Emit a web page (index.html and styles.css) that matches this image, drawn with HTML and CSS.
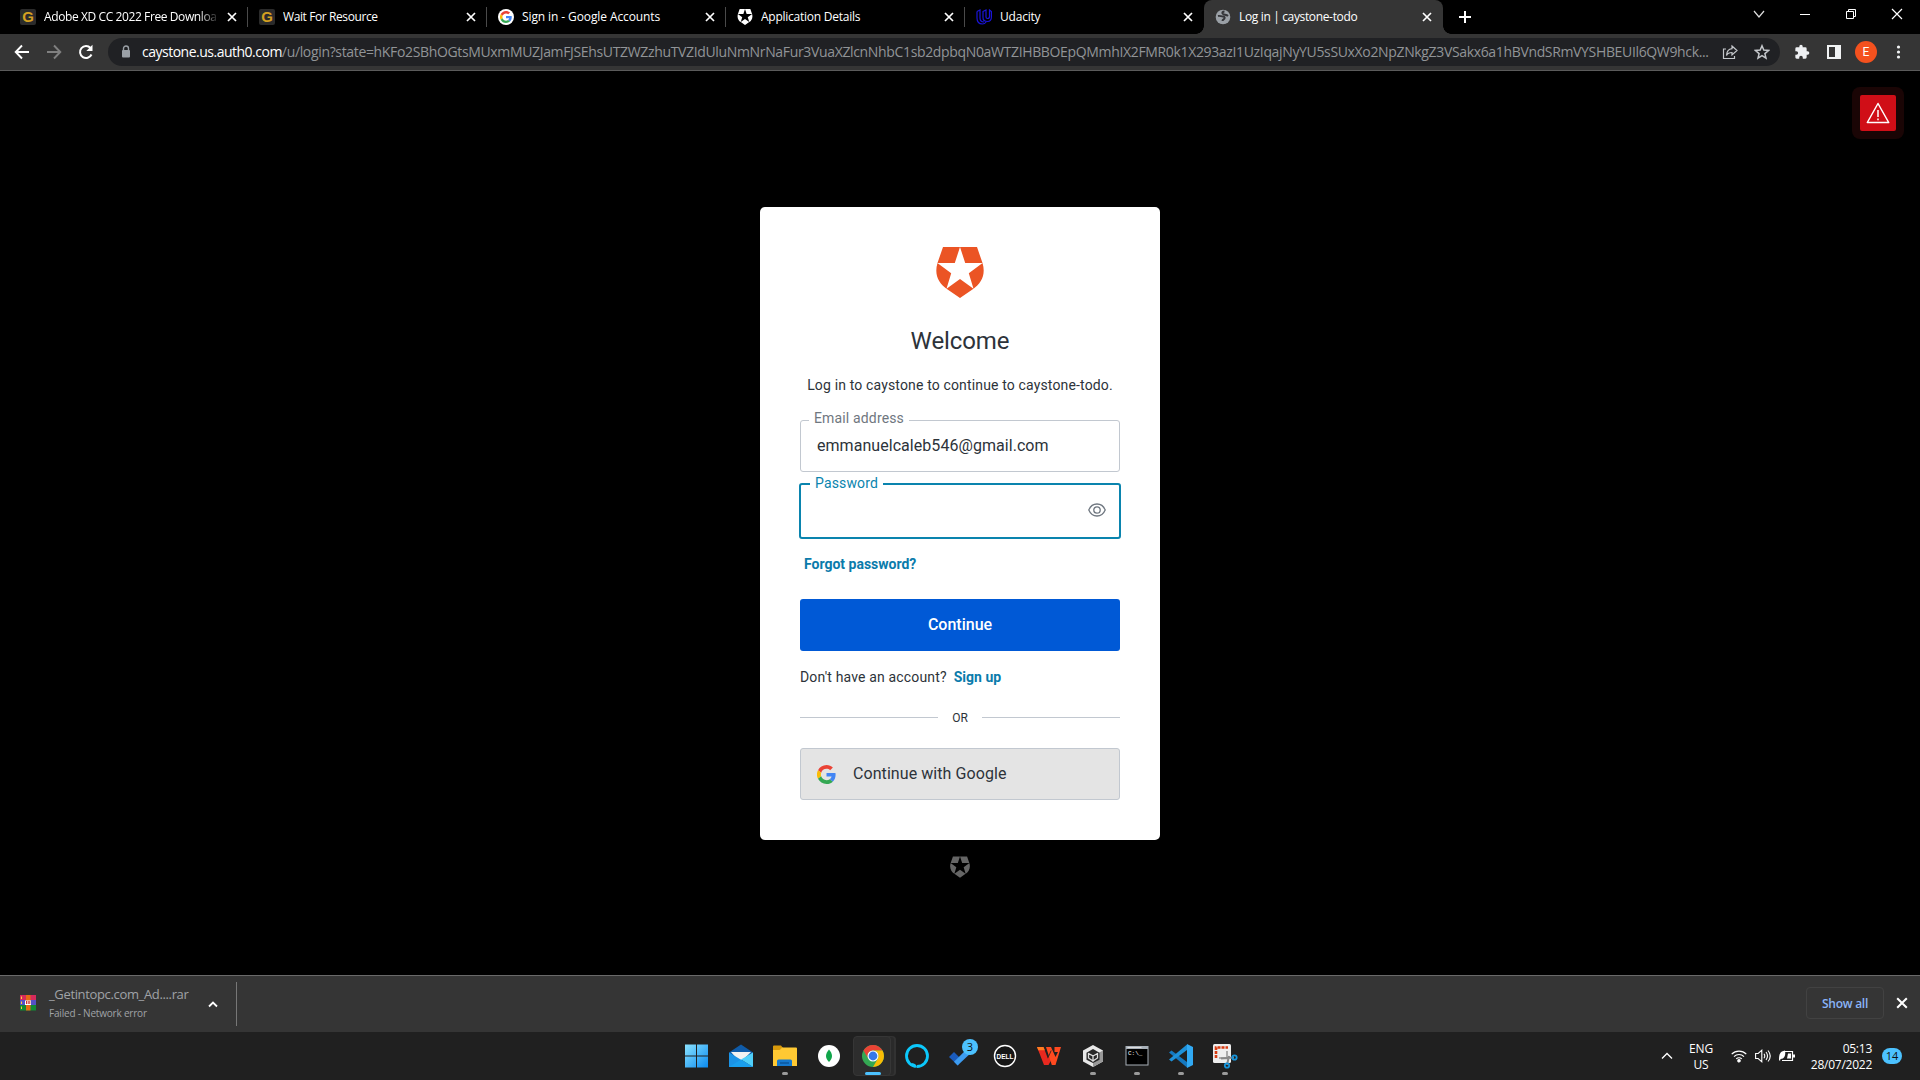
FILE: index.html
```html
<!DOCTYPE html>
<html lang="en">
<head>
<meta charset="utf-8">
<title>Log in | caystone-todo</title>
<link rel="stylesheet" href="styles.css">
</head>
<body>
<svg class="defs" width="0" height="0" aria-hidden="true">
  <symbol id="x" viewBox="0 0 10 10"><path d="M1 1l8 8M9 1L1 9" stroke="currentColor" stroke-width="1.700" fill="none"/></symbol>
  <symbol id="shield" viewBox="0 0 48 51"><path fill-rule="evenodd" fill="currentColor" d="M7 0H41L46.6 16.3C50 28 45 36.500 37.500 41.800L24 51 10.500 41.800C3 36.500-2 28 1.400 16.300ZM24 0L18.800 16H1.400L15.200 26.200 10.500 41.800 24 32 37.500 41.800 32.800 26.200 46.600 16H29.200Z"/></symbol>
  <symbol id="google" viewBox="0 0 48 48"><path fill="#ea4335" d="M24 9.500c3.500 0 6.700 1.200 9.200 3.600l6.900-6.900C35.900 2.400 30.500 0 24 0 14.600 0 6.500 5.400 2.600 13.200l8 6.200C12.400 13.700 17.700 9.500 24 9.500z"/><path fill="#4285f4" d="M47 24.600c0-1.600-.2-3.100-.4-4.600H24v9h12.900c-.6 3-2.200 5.500-4.700 7.200l7.700 6C44.400 38 47 31.800 47 24.600z"/><path fill="#fbbc05" d="M10.500 28.600a14.500 14.500 0 0 1 0-9.200l-8-6.200a24 24 0 0 0 0 21.600z"/><path fill="#34a853" d="M24 48c6.500 0 11.900-2.100 15.900-5.800l-7.700-6c-2.200 1.500-4.900 2.300-8.200 2.300-6.300 0-11.600-4.200-13.500-9.900l-8 6.200C6.500 42.600 14.600 48 24 48z"/></symbol>
  <symbol id="up" viewBox="0 0 12 8"><path d="M1 6.500l5-5 5 5" stroke="currentColor" stroke-width="1.300" fill="none"/></symbol>
</svg>

<header class="tabs">
  <div class="tab"><span class="fav gold">G</span><span class="title fade t1">Adobe XD CC 2022 Free Downloa</span><svg class="close"><use href="#x"/></svg></div>
  <div class="tab"><span class="fav gold">G</span><span class="title t2">Wait For Resource</span><svg class="close"><use href="#x"/></svg></div>
  <div class="tab"><span class="fav round"><svg width="12" height="12"><use href="#google"/></svg></span><span class="title t3">Sign in - Google Accounts</span><svg class="close"><use href="#x"/></svg></div>
  <div class="tab"><svg class="fav white"><use href="#shield"/></svg><span class="title t4">Application Details</span><svg class="close"><use href="#x"/></svg></div>
  <div class="tab last"><svg class="fav" viewBox="0 0 16 16" fill="none" stroke="#1a14d8" stroke-width="1.200"><path d="M1 2.500L4 1v8c0 2.500 1.500 4 4 4M1 2.500V9c0 3.500 2 6 5.500 6 2 0 3-1 4-2.500M7 2.500L10 1v7c0 1 .5 1.500 1.500 1.500s2-.7 2-2V1L15.400 2.500V8c0 3-1.500 4.500-4 4.500S7 11 7 8.500z"/></svg><span class="title t5">Udacity</span><svg class="close"><use href="#x"/></svg></div>
  <div class="tab active"><svg class="fav" viewBox="0 0 16 16"><circle cx="8" cy="8" r="7.300" fill="#9aa0a6"/><path d="M3 7c2-.5 3 .5 5 .5 1.500 0 2 1 1.500 2s-2 1-2 2.500M9.500 2.500c-2 0-3 1.500-1.500 2.500s3.500.5 5 2" stroke="#35363a" stroke-width="1.900" fill="none"/></svg><span class="title t6">Log in | caystone-todo</span><svg class="close"><use href="#x"/></svg></div>
  <svg class="plus" viewBox="0 0 12 12"><path d="M6 0v12M0 6h12" stroke="#fff" stroke-width="2"/></svg>
  <div class="controls">
    <svg viewBox="0 0 12 12"><path d="M1 3l5 6 5-6" stroke="#ddd" stroke-width="1.200" fill="none"/></svg>
    <svg viewBox="0 0 12 12"><path d="M1 6.500h10" stroke="#fff"/></svg>
    <svg viewBox="0 0 12 12"><path d="M1.500 3.500h7v7h-7zM3.500 3.500v-2h7v7h-2" stroke="#fff" fill="none"/></svg>
    <svg viewBox="0 0 12 12"><path d="M1 1l10 10M11 1L1 11" stroke="#fff" stroke-width="1.200"/></svg>
  </div>
</header>

<nav class="toolbar">
  <div class="navicons">
    <svg viewBox="0 0 16 16"><path d="M15 8H2M8 1.500L1.700 8 8 14.500" stroke="#fff" stroke-width="1.900" fill="none"/></svg>
    <svg viewBox="0 0 16 16"><path d="M1 8h13M8 1.500L14.300 8 8 14.500" stroke="#808080" stroke-width="1.900" fill="none"/></svg>
    <svg viewBox="0 0 16 16"><path d="M13.500 10.500A6 6 0 1 1 12.500 4" stroke="#fff" stroke-width="2" fill="none"/><path d="M14.500.8v6.200H8.300z" fill="#fff"/></svg>
  </div>
  <div class="omnibox">
    <svg class="lock" viewBox="0 0 10 14"><path d="M2.500 6V3.500a2.500 2.500 0 0 1 5 0V6" stroke="#9aa0a6" stroke-width="1.400" fill="none"/><rect x="1" y="5" width="8" height="7.500" rx="1" fill="#9aa0a6"/></svg>
    <div class="url"><b>caystone.us.auth0.com</b><span>/u/login?state=hKFo2SBhOGtsMUxmMUZJamFJSEhsUTZWZzhuTVZIdUluNmNrNaFur3VuaXZlcnNhbC1sb2dpbqN0aWTZIHBBOEpQMmhIX2FMR0k1X293azI1UzIqajNyYU5sSUxXo2NpZNkgZ3VSakx6a1hBVndSRmVYSHBEUIl6QW9hck...</span></div>
    <svg class="oicon" viewBox="0 0 16 16" fill="none" stroke="#c4c7cb" stroke-width="1.200"><path d="M4 5H1.500v9.500h11V12M10 2l5 4.500L10 11V8.500C7 8.500 5.500 9.500 4.500 11.500 4.700 7.500 7 5 10 4.700z"/></svg>
    <svg class="oicon" viewBox="0 0 16 16"><path d="M8 1.800l1.800 4.300 4.700.4-3.600 3.100 1.100 4.600L8 11.700l-4 2.500 1.100-4.600L1.500 6.500l4.700-.4z" fill="none" stroke="#c4c7cb" stroke-width="1.500"/></svg>
  </div>
  <div class="actions">
    <svg viewBox="0 0 24 24"><path fill="#eef0f2" d="M20.500 11H19V7a2 2 0 0 0-2-2h-4V3.500a2.500 2.500 0 0 0-5 0V5H4a2 2 0 0 0-2 2v3.800h1.500a2.700 2.700 0 0 1 0 5.400H2V20a2 2 0 0 0 2 2h3.800v-1.500a2.700 2.700 0 0 1 5.400 0V22H17a2 2 0 0 0 2-2v-4h1.500a2.500 2.500 0 0 0 0-5z"/></svg>
    <svg viewBox="0 0 16 16"><path fill-rule="evenodd" fill="#f1f3f4" d="M1 1h14v14H1zM3 3v10h6V3z"/></svg>
    <span class="avatar">E</span>
    <svg viewBox="0 0 16 16" fill="#f1f3f4"><circle cx="8.500" cy="3" r="1.600"/><circle cx="8.500" cy="8" r="1.600"/><circle cx="8.500" cy="13" r="1.600"/></svg>
  </div>
</nav>

<main class="page">
  <div class="warn"><span><svg viewBox="0 0 24 22"><path d="M12 1.500L22.700 20.500H1.300zM12 8v7M12 16.500v1.800" fill="none" stroke="#fff" stroke-width="1.500" stroke-linejoin="round"/></svg></span></div>
  <section class="card">
    <svg class="logo"><use href="#shield"/></svg>
    <h1>Welcome</h1>
    <p class="intro">Log in to caystone to continue to caystone-todo.</p>
    <fieldset class="field"><legend>Email address</legend><span>emmanuelcaleb546@gmail.com</span></fieldset>
    <fieldset class="field focus"><legend>Password</legend><svg class="eye" viewBox="0 0 18 14" fill="none" stroke="#6f7780" stroke-width="1.300"><path d="M.8 7C2.500 3 5.500 1 9 1s6.500 2 8.200 6C15.500 11 12.500 13 9 13S2.500 11 .8 7z"/><circle cx="9" cy="7" r="3.200"/></svg></fieldset>
    <a class="forgot">Forgot password?</a>
    <button class="primary">Continue</button>
    <p class="signup"><span>Don't have an account?</span><a>Sign up</a></p>
    <div class="or"><span>OR</span></div>
    <button class="google"><svg><use href="#google"/></svg><span>Continue with Google</span></button>
  </section>
  <svg class="badge"><use href="#shield"/></svg>
</main>

<section class="shelf">
  <svg class="rar" viewBox="0 0 16 16"><path fill="#d62a5c" d="M0 0h16v5H0z"/><path fill="#5550c8" d="M0 5h16v5H0z"/><path fill="#128a35" d="M0 10h16v5.500H0z"/><path fill="#e56a16" d="M6 0h4.500v15.500H6z"/><path fill="#fff" d="M5 5.500h6V10H5z"/><path d="M6.500 6v3M8.200 6v3M9.800 6v3" stroke="#c33"/><path stroke="#ffd33c" d="M1.500 1.500v2.500M1.500 6.500V9M1.500 11.500V14"/></svg>
  <div class="file"><span>_Getintopc.com_Ad....rar</span><small>Failed - Network error</small></div>
  <svg class="chev" viewBox="0 0 10 7"><path d="M1 5.500l4-4 4 4" stroke="#fff" stroke-width="1.800" fill="none"/></svg>
  <i class="rule"></i>
  <button class="showall">Show all</button>
  <svg class="closeshelf"><use href="#x"/></svg>
</section>

<footer class="taskbar">
  <div class="apps">
    <div class="app"><svg viewBox="0 0 24 24"><defs><linearGradient id="w" x2="1" y2="1"><stop stop-color="#8be3ff"/><stop offset="1" stop-color="#0a8af0"/></linearGradient></defs><path fill="url(#w)" d="M0 .5h11v11H0zM12 .5h11v11H12zM0 12.500h11v11H0zM12 12.500h11v11H12z"/></svg></div>
    <div class="app"><svg viewBox="0 0 24 24"><path fill="#0f5ba8" d="M0 8.500L12 .5l12 8V12H0z"/><path fill="#f2f2f2" d="M2 8h20l-8 8H9z"/><path fill="#1b93e6" d="M0 8.500L24 23H0z"/><path fill="#50d0fa" d="M24 8.500V23L12 15.500z"/><path fill="#1a9fee" d="M0 23l12-7.500L24 23z"/></svg></div>
    <div class="app run"><svg viewBox="0 0 24 24"><path fill="#d99a0b" d="M0 2.500Q0 1.500 1 1.500h7l2 2.500h-1L7 6H0z"/><path fill="#ffc933" d="M0 6h6.500L9 3.500h14q1 0 1 1V22H0z"/><path fill="#1579cf" d="M4 22v-5q0-1.500 1.500-1.500h12q1.500 0 1.500 1.500v5z"/><path d="M7 19h9" stroke="#0a4e91" stroke-width="1.200"/></svg></div>
    <div class="app"><svg viewBox="0 0 24 24"><circle cx="12" cy="12" r="11" fill="#fff"/><path fill="#10a54a" d="M12 5.500c4 4.500 4 8.500 0 12.500-4-4-4-8 0-12.500z"/></svg></div>
    <div class="app run current"><svg viewBox="0 0 24 24"><circle cx="12" cy="12" r="11" fill="#34a853"/><path fill="#ea4335" d="M2.500 6.500A11 11 0 0 1 21.500 6.500H12A5.500 5.500 0 0 0 7.200 14.700z"/><path fill="#fbbc05" d="M21.500 6.500A11 11 0 0 1 12 23l4.800-8.300A5.500 5.500 0 0 0 12 6.500z"/><circle cx="12" cy="12" r="5.500" fill="#fff"/><circle cx="12" cy="12" r="4.400" fill="#3478e8"/></svg></div>
    <div class="app"><svg viewBox="0 0 24 24"><circle cx="12" cy="12" r="10.500" fill="none" stroke="#0cc8fb" stroke-width="2.800"/><path d="M11 19.500c.5 2 .5 3 0 4.500" stroke="#202020" stroke-width="1.500"/><path d="M7 20q4 1 4 3.500" stroke="#0cc8fb" stroke-width="2" fill="none"/></svg></div>
    <div class="app"><svg viewBox="0 0 24 24"><path fill="#1b5cbe" d="M0 13l5-5 7 7-3 6.500z"/><path fill="#3d9cf0" d="M8.500 21.500L5 17.800 21 2l4 4z"/></svg><b class="count">3</b></div>
    <div class="app"><svg viewBox="0 0 24 24"><circle cx="12" cy="12" r="10.500" fill="#171717" stroke="#fff" stroke-width="1.400"/><text x="12" y="14.700" text-anchor="middle" textLength="17" lengthAdjust="spacingAndGlyphs" font-family="Liberation Sans" font-weight="700" font-size="7.500" fill="#fff">DELL</text></svg></div>
    <div class="app"><svg viewBox="0 0 24 24"><path fill="#e8291f" d="M0 3h6.500l4.200 11L14.500 6l2.300 5.500L11.500 21H7z"/><path fill="#ff4a20" d="M9 3h5l4.500 10L21 8h-3.500V3H24l-5.500 18h-3.700z"/><path fill="#ff7b20" d="M0 3h6.500l1.300 3.200H1.200z"/><path d="M14.200 6.500l-3.400 7.700" stroke="#202020" stroke-width=".8"/></svg></div>
    <div class="app run"><svg viewBox="0 0 24 24"><path fill="#e8e8e8" d="M12 1l10 5.500v11L12 23 2 17.500v-11z"/><path fill="#999" d="M12 23V12l10-5.500v11z"/><path fill="#282828" d="M12 5l6.500 3.700v7L12 19l-6.500-3.300v-7z"/><path d="M12 18v-6L7 9.200M12 12l5-2.800M7.500 9v5l4.500 3 4.500-3V9" stroke="#ddd" stroke-width="1.300" fill="none"/></svg></div>
    <div class="app run"><svg viewBox="0 0 24 24"><path fill="#a8b0b8" d="M.5 2h23v19.500H.5z"/><path fill="#000" d="M1.500 5h21v15.500h-21z"/><path d="M2.500 3.500h14" stroke="#ddd"/><text x="3" y="11" font-family="Liberation Mono" font-size="6" fill="#fff">C:\_</text></svg></div>
    <div class="app run"><svg viewBox="0 0 24 24"><path fill="#1578bf" d="M0 8.500L2.500 6.500 18 18v5.500z"/><path fill="#1e91d9" d="M0 15.500L2.500 17.500 18 6V.5z"/><path fill="#31a9f3" d="M18 0l6 3v18l-6 3V0z"/></svg></div>
    <div class="app run"><svg viewBox="0 0 24 24" overflow="visible"><rect y="0" width="18" height="19" rx="1.500" fill="#eee"/><path d="M3 14V3.500h12" stroke="#d83b12" stroke-width="2.600" stroke-dasharray="3 1" fill="none"/><path d="M6 14h8V7" stroke="#aaa" stroke-width="2" fill="none"/><path d="M8 14.500l13-1M14 21l2-9" stroke="#888" stroke-width="2"/><g fill="none" stroke="#1595dc" stroke-width="1.800"><circle cx="21.500" cy="13.500" r="2.200"/><circle cx="14" cy="21.500" r="2.200"/></g></svg></div>
  </div>
  <div class="tray">
    <svg class="tup"><use href="#up"/></svg>
    <div class="lang"><span>ENG</span><span>US</span></div>
    <svg class="ti" viewBox="0 0 16 16" fill="none" stroke="#fff" stroke-width="1.200"><path d="M.7 6.200a10.300 10.300 0 0 1 14.600 0M3 8.600a7 7 0 0 1 10 0M5.200 10.900a4 4 0 0 1 5.600 0"/><circle cx="8" cy="12.700" r="1.200" fill="#fff"/></svg>
    <svg class="ti" viewBox="0 0 16 16" fill="none" stroke="#fff" stroke-width="1.100"><path d="M.6 5.500h2.600l3.600-3.300v11.600L3.200 10.500H.6zM9 5.800q1.500 2.200 0 4.400M11 4q3 4 0 8M13 2.500q4.500 5.500 0 11"/></svg>
    <svg class="ti" viewBox="0 0 16 16"><path d="M5 3.500h8.500v9H3" fill="none" stroke="#fff" stroke-width="1.200"/><path fill="#fff" d="M14 6.500h2v3h-2zM9 5.500h3v5H8zM0 12C0 6 1 3.500 6 2.500 7 8 5 11 1.500 11l-.5 2z"/></svg>
    <div class="clock"><span>05:13</span><span>28/07/2022</span></div>
    <b class="notes">14</b>
  </div>
</footer>
</body>
</html>
```
FILE: styles.css
```css
* { box-sizing: border-box; }
body { margin: 0; width: 1920px; height: 1080px; overflow: hidden; display: flex; flex-direction: column; background: #000; color: #fff; font-family: "Open Sans", "Noto Sans", sans-serif; font-size: 12px; }
svg { display: block; flex: none; }
button { font: inherit; margin: 0; }
.defs { position: absolute; }

.tabs { height: 34px; flex: none; display: flex; align-items: stretch; padding-left: 9px; }
.tab { width: 239px; display: flex; align-items: center; padding: 0 11px 0 11px; position: relative; }
.tab:not(.active):not(.last)::after { content: ""; position: absolute; right: 0; top: 7px; width: 1px; height: 20px; background: #4a4a4a; }
.fav { width: 16px; height: 16px; flex: none; margin-right: 8px; }
.gold { background: #2b2b2b; color: #d5a021; font: 700 15px/16px "Liberation Sans", sans-serif; text-align: center; border-radius: 2px; }
.round { background: #fff; border-radius: 50%; display: grid; place-items: center; }
.white { color: #fff; }
.title { flex: 1; white-space: nowrap; overflow: hidden; line-height: 18px; }
.t1, .t2 { letter-spacing: -0.4px; }
.t3 { letter-spacing: -0.1px; }
.t4 { letter-spacing: -0.25px; }
.t6 { letter-spacing: -0.35px; }
.t5 { letter-spacing: -0.2px; }
.fade { -webkit-mask-image: linear-gradient(90deg, #000 88%, transparent); mask-image: linear-gradient(90deg, #000 88%, transparent); }
.close { width: 10px; height: 10px; margin: 0 0 0 7px; }
.active { background: #353535; border-radius: 8px 8px 0 0; width: 239px; }
.active::before { content: ""; position: absolute; left: -8px; bottom: 0; width: 8px; height: 8px; background: radial-gradient(circle at 0 0, transparent 7.5px, #353535 8px); }
.active::after { content: ""; position: absolute; right: -8px; bottom: 0; width: 8px; height: 8px; background: radial-gradient(circle at 100% 0, transparent 7.5px, #353535 8px); }
.plus { width: 12px; height: 12px; margin: 11px 0 0 16px; }
.controls { margin-left: auto; display: flex; gap: 34px; padding: 8px 17px 0 0; }
.controls svg { width: 12px; height: 12px; }

.toolbar { height: 37px; flex: none; display: flex; align-items: center; background: #353535; border-bottom: 1px solid #5b5b5b; }
.navicons { display: flex; gap: 16px; width: 108px; padding-left: 14px; }
.navicons svg { width: 16px; height: 16px; }
.omnibox { width: 1672px; height: 28px; border-radius: 14px; background: #202124; display: flex; align-items: center; padding-left: 13px; }
.lock { width: 10px; height: 14px; margin-right: 11px; }
.url { width: 1572px; font-size: 14px; line-height: 20px; white-space: nowrap; color: #919497; }
.url b { color: #fff; font-weight: 400; letter-spacing: -0.5px; }
.url span { letter-spacing: -0.345px; }
.oicon { width: 16px; height: 16px; margin-left: 8px; }
.oicon + .oicon { margin-left: 16px; }
.actions { display: flex; align-items: center; gap: 16px; padding-left: 14px; }
.actions svg { width: 16px; height: 16px; }
.avatar { width: 22px; height: 22px; margin: 0 -3px; border-radius: 50%; background: #f4511e; text-align: center; line-height: 22px; font-family: Roboto, sans-serif; }

.page { height: 904px; flex: none; position: relative; background: #000; padding-top: 136px; display: flex; flex-direction: column; align-items: center; font-family: Roboto, sans-serif; }
.warn { position: absolute; right: 16px; top: 16px; width: 52px; height: 52px; border-radius: 8px; background: #1a0505; display: grid; place-items: center; }
.warn span { width: 36px; height: 36px; border-radius: 2px; background: #d00e17; display: grid; place-items: center; }
.warn svg { width: 24px; height: 22px; }
.card { width: 400px; height: 633px; border-radius: 5px; background: #fff; color: #2d333a; padding: 40px; display: flex; flex-direction: column; align-items: stretch; }
.logo { width: 48px; height: 51px; color: #eb5424; align-self: center; }
h1 { font-size: 24px; font-weight: 400; line-height: 28px; margin: 29px 0 0; text-align: center; letter-spacing: -0.1px; }
.intro { font-size: 14px; line-height: 20px; margin: 20px -10px 0; text-align: center; letter-spacing: 0.15px; white-space: nowrap; }
.field { margin: 15px 0 0; height: 62px; min-width: 0; padding: 0 16px; border: 1px solid #c2c8d0; border-radius: 3px; font-size: 16px; }
.field legend { font-size: 14px; line-height: 17px; padding: 0 5px 4px; margin-left: -8px; color: #6f7780; letter-spacing: 0.15px; }
.field > span { display: block; line-height: 20px; margin-top: 5px; letter-spacing: 0.05px; }
.field.focus { margin: 3px -1px 0; height: 65px; border: 2px solid #0a84ae; }
.field.focus legend { color: #0a84ae; padding-bottom: 2px; margin-left: -7px; }
.eye { width: 18px; height: 14px; margin: 9px -3px 0 auto; }
a { color: #0a7bab; font-weight: 700; }
.forgot { font-size: 14px; line-height: 20px; margin: 15px 0 0 4px; }
.primary { margin-top: 25px; height: 52px; padding: 0 0 2px; border: 0; border-radius: 3px; background: #0059d6; color: #fff; font-size: 16px; font-weight: 500; }
.signup { margin: 16px 0 0; font-size: 14px; line-height: 20px; display: flex; gap: 7px; }
.signup span { letter-spacing: 0.16px; }
.or { display: flex; align-items: center; gap: 14px; margin-top: 23px; height: 15px; font-size: 12px; }
.or::before, .or::after { content: ""; flex: 1; height: 1px; background: #c2c8d0; }
.google { margin-top: 23px; height: 52px; border: 1px solid #c2c8d0; border-radius: 3px; background: #e4e4e4; color: #2d333a; font-size: 16px; display: flex; align-items: center; padding: 0 16px; gap: 17px; }
.google svg { width: 19px; height: 19px; }
.google span { padding-bottom: 2px; letter-spacing: 0.07px; }
.badge { width: 20px; height: 22px; margin-top: 16px; color: #656565; }

.shelf { height: 57px; flex: none; border-top: 1px solid #6a6a6a; background: #353535; display: flex; align-items: center; padding-left: 20px; }
.rar { width: 16px; height: 16px; margin-right: 13px; margin-bottom: 2px; }
.file { width: 159px; display: flex; flex-direction: column; color: #a0a3a7; white-space: nowrap; }
.file span { font-size: 13px; line-height: 20px; margin-top: -1px; letter-spacing: -0.35px; }
.file small { font-size: 10px; line-height: 19px; letter-spacing: -0.2px; }
.chev { width: 10px; height: 7px; }
.rule { width: 1px; height: 44px; background: #777; margin-left: 18px; }
.showall { margin-left: auto; width: 78px; height: 32px; margin-bottom: 2px; border: 1px solid #424242; border-radius: 4px; background: transparent; color: #8ab4f8; font-size: 12px; font-weight: 600; padding: 0; letter-spacing: -0.25px; }
.closeshelf { width: 12px; height: 12px; margin: 0 12px 2px; }

.taskbar { height: 48px; flex: none; background: #202020; display: flex; align-items: center; }
.apps { display: flex; margin-left: 675px; }
.app { width: 44px; height: 48px; display: grid; place-items: center; position: relative; }
.app svg { width: 24px; height: 24px; position: relative; }
.run::after { content: ""; position: absolute; left: 19px; bottom: 5px; width: 6px; height: 3px; border-radius: 2px; background: #9b9b9b; }
.current::before { content: ""; position: absolute; top: 4px; bottom: 4px; left: 2px; width: 36px; background: #2d2d2d; border: 1px solid #363636; border-radius: 4px; box-shadow: 4px 0 0 -1px #2a2a2a, 5px 0 0 0 #323232; }
.current::after { left: 14px; width: 16px; background: #4cc2ff; }
.count { position: absolute; left: 23px; top: 7px; width: 16px; height: 16px; border-radius: 50%; background: #4cc2ff; color: #111; text-align: center; font-size: 11px; line-height: 16px; font-weight: 400; }
.tray { margin-left: auto; display: flex; align-items: center; padding-right: 18px; }
.tup { width: 12px; height: 8px; margin-right: 16px; }
.lang { width: 24px; display: flex; flex-direction: column; align-items: center; line-height: 16px; padding-top: 2px; margin-right: 18px; letter-spacing: -0.2px; }
.ti { width: 16px; height: 16px; margin-right: 8px; }
.clock { width: 69px; display: flex; flex-direction: column; align-items: flex-end; line-height: 16px; padding-top: 1px; letter-spacing: -0.25px; white-space: nowrap; }
.notes { width: 20px; height: 16px; margin-left: 10px; border-radius: 8px; background: #4cc2ff; color: #111; text-align: center; font-size: 11px; line-height: 16px; font-weight: 400; }
```
